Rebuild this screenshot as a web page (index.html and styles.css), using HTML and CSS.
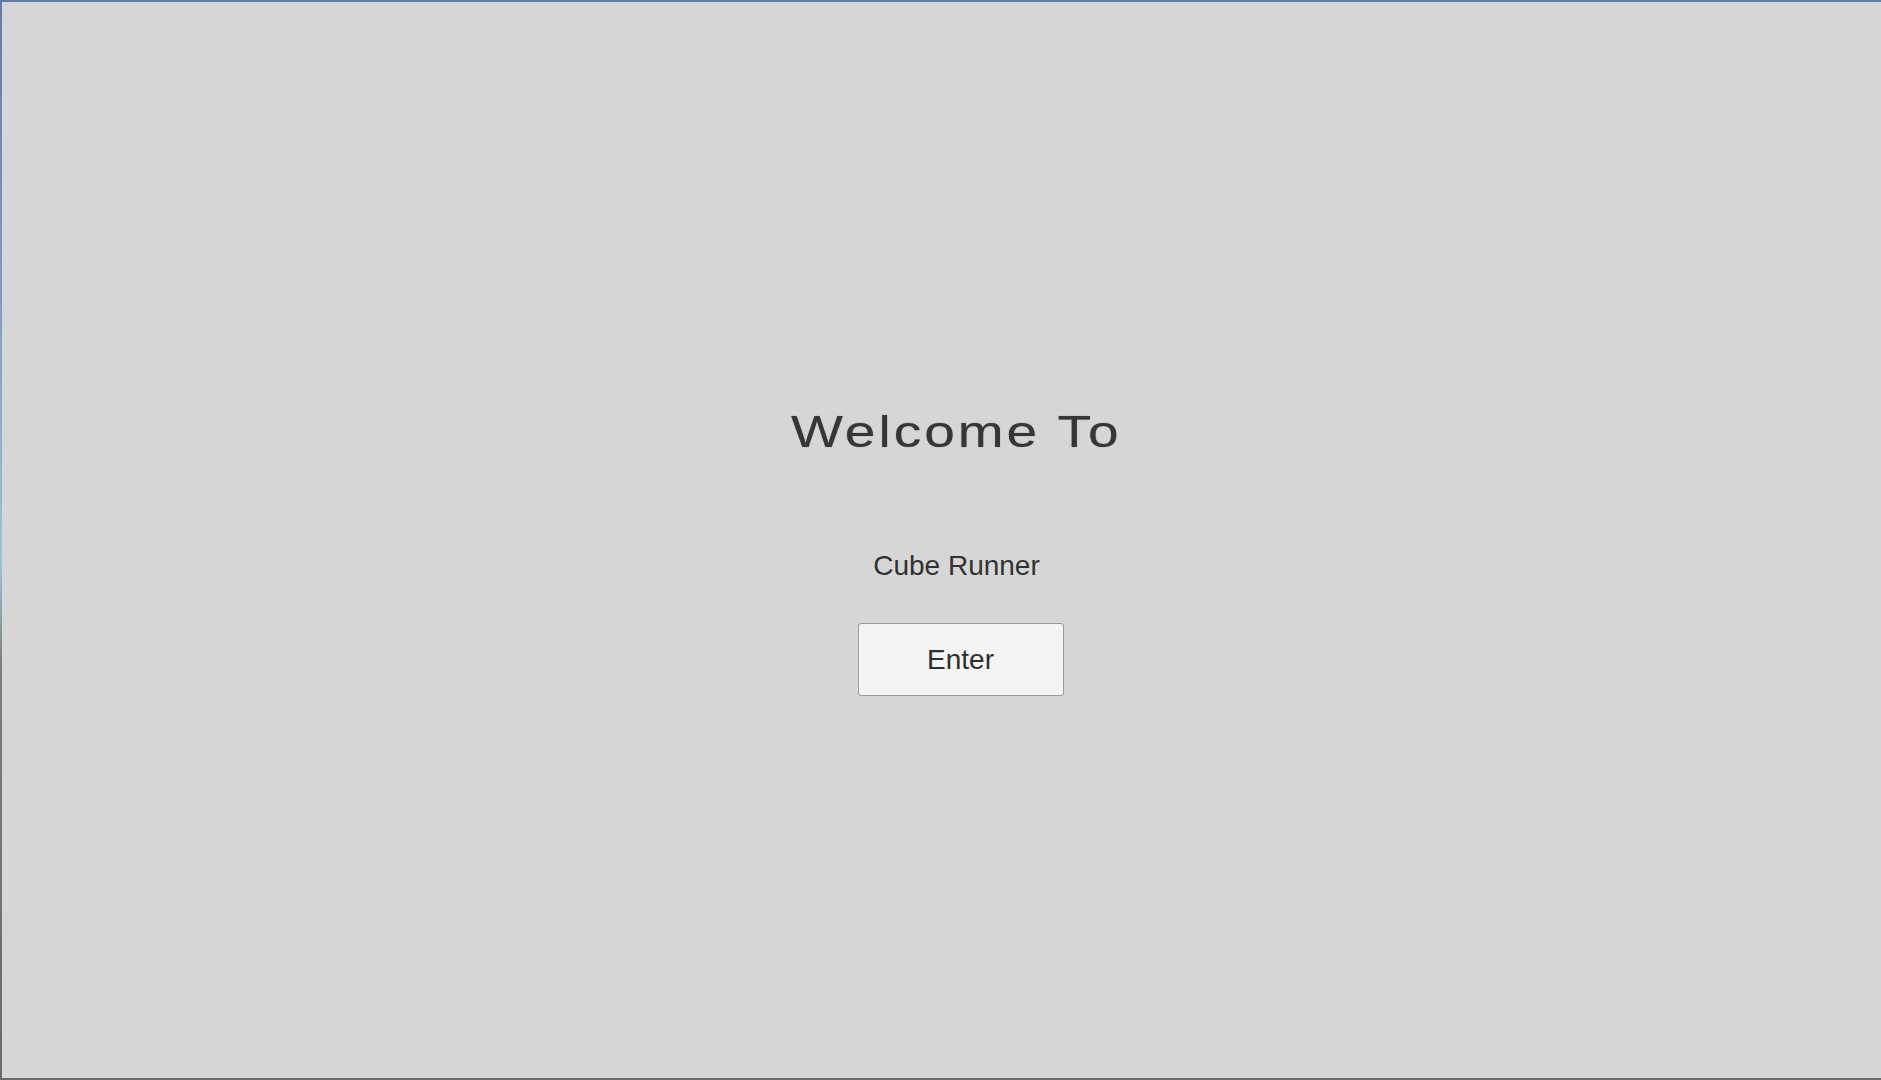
FILE: index.html
```html
<!DOCTYPE html>
<html>
<head>
<meta charset="utf-8">
<title>Cube Runner</title>
<link rel="stylesheet" href="styles.css">
</head>
<body>
<div class="frame">
  <div class="edge"></div>
  <main class="screen">
    <h1 class="welcome">Welcome To</h1>
    <p class="game">Cube Runner</p>
    <button class="enter">Enter</button>
  </main>
</div>
</body>
</html>
```

FILE: styles.css
```css
html, body {
  margin: 0;
  padding: 0;
  background: #d6d6d6;
  overflow: hidden;
}
.frame {
  box-sizing: border-box;
  width: 1881px;
  height: 1080px;
  display: flex;
  border-top: 2px solid #5f7ca6;
  border-bottom: 2px solid #6b6b6b;
  background: #d6d6d6;
  overflow: hidden;
}
.edge {
  width: 2px;
  flex: none;
  background: linear-gradient(to bottom, #5f7ca6 0%, #7f9fc8 30%, #9cc4d4 52%, #7c7c7c 62%, #6b6b6b 100%);
}
.screen {
  flex: 1;
  display: flex;
  flex-direction: column;
  align-items: center;
  padding-top: 404px;
  padding-left: 30px;
  font-family: "Liberation Sans", Arial, sans-serif;
  color: #323232;
}
.welcome {
  margin: 0;
  font-size: 44px;
  line-height: 52px;
  font-weight: normal;
  letter-spacing: 2.4px;
  transform: scaleX(1.25);
  color: #363636;
  text-shadow: 0 0 1px rgba(50,50,50,0.6);
}
.game {
  margin: 92px 0 0 0;
  font-size: 28px;
  line-height: 32px;
}
.enter {
  margin-top: 41px;
  width: 206px;
  height: 73px;
  box-sizing: border-box;
  background: #f4f4f4;
  border: 1px solid #9a9a9a;
  border-radius: 3px;
  font-family: "Liberation Sans", Arial, sans-serif;
  font-size: 28px;
  color: #2e2e2e;
  padding: 0;
  margin-left: 8px;
}
```
